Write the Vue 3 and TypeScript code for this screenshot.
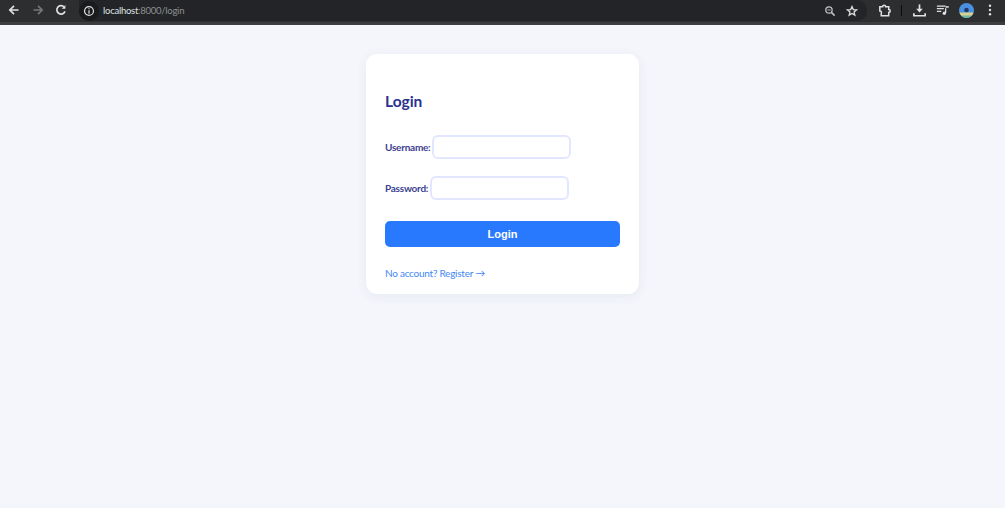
<script setup lang="ts">
import { ref } from "vue";

const username = ref("");
const password = ref("");
</script>

<template>
  <div class="page">
    <header class="toolbar">
      <div class="nav">
        <svg viewBox="0 0 16 16" width="16" height="16">
          <path d="M12.500 8H4M8 3.800 3.800 8 8 12.200" fill="none" stroke="#dfe1e4" stroke-width="1.700" />
        </svg>
        <svg viewBox="0 0 16 16" width="16" height="16">
          <path d="M3.500 8H12M8 3.800 12.200 8 8 12.200" fill="none" stroke="#74777a" stroke-width="1.700" />
        </svg>
        <svg viewBox="0 0 16 16" width="16" height="16">
          <path d="M12 9.400A4.200 4.200 0 1 1 11.100 5" fill="none" stroke="#dfe1e4" stroke-width="1.700" />
          <path d="M12.400 3v3.700H8.700z" fill="#dfe1e4" />
        </svg>
      </div>
      <div class="omnibox">
        <span class="site-chip">
          <svg viewBox="0 0 14 14" width="12" height="12">
            <circle cx="7" cy="7" r="5.200" fill="none" stroke="#dfe1e4" stroke-width="1.400" />
            <path d="M7 6.200v4M7 3.800v1.300" stroke="#dfe1e4" stroke-width="1.400" />
          </svg>
        </span>
        <span class="url"><span class="host">localhost</span>:8000/login</span>
        <div class="omni-actions">
          <svg viewBox="0 0 14 14" width="12" height="12">
            <circle cx="5.800" cy="5.800" r="3.700" fill="none" stroke="#c4c7c5" stroke-width="1.400" />
            <path d="M8.600 8.600 12.400 12.400" stroke="#c4c7c5" stroke-width="1.700" />
            <path d="M3.900 5.800h3.800" stroke="#c4c7c5" stroke-width="1" />
          </svg>
          <svg viewBox="0 0 14 14" width="12" height="12">
            <path d="M7 1.800 8.500 5.300l3.800.3-2.900 2.500.9 3.700L7 9.800l-3.300 2 .9-3.700L1.700 5.600l3.800-.3z" fill="none" stroke="#dcdcdc" stroke-width="1.500" />
          </svg>
        </div>
      </div>
      <div class="tools">
        <svg class="ext" viewBox="0 0 16 16" width="15" height="15">
          <path d="M3 4h3a1.600 1.600 0 0 1 3.200 0h3.300v3a1.600 1.600 0 0 1 0 3.200v3.300H4.500V11a1.600 1.600 0 0 0-1.500-2.500z" fill="none" stroke="#dfe1e4" stroke-width="1.600" />
        </svg>
        <span class="divider"></span>
        <svg class="dl" viewBox="0 0 16 16" width="15" height="15">
          <path d="M8 1.500v7" stroke="#dfe1e4" stroke-width="1.800" />
          <path d="M4.500 6 8 10.200 11.500 6z" fill="#dfe1e4" />
          <path d="M2 11v2.600h12V11" fill="none" stroke="#dfe1e4" stroke-width="1.800" />
        </svg>
        <svg class="media" viewBox="0 0 16 16" width="14" height="14">
          <path d="M1 3.500h10M1 6.500h8M1 9.500h5" stroke="#dfe1e4" stroke-width="1.500" />
          <path d="M11 6v5.500" stroke="#dfe1e4" stroke-width="1.500" />
          <circle cx="9.500" cy="11.700" r="1.900" fill="#dfe1e4" />
          <path d="M11 4.500h3.500" stroke="#dfe1e4" stroke-width="1.800" />
        </svg>
        <svg class="avatar" viewBox="0 0 15 15" width="15" height="15">
          <circle cx="7.500" cy="7.500" r="7.500" fill="#4a90e2" />
          <path d="M.4 9.500h14.200a7.500 7.500 0 0 1-14.200 0z" fill="#d9cf8f" />
          <path d="M2 12.500h11a7.500 7.500 0 0 1-11 0z" fill="#6fb8a6" />
          <circle cx="7.500" cy="7" r="2.300" fill="#1f3a68" />
        </svg>
        <svg class="more" viewBox="0 0 4 14" width="4" height="12">
          <circle cx="2" cy="2" r="1.400" fill="#dfe1e4" />
          <circle cx="2" cy="7" r="1.400" fill="#dfe1e4" />
          <circle cx="2" cy="12" r="1.400" fill="#dfe1e4" />
        </svg>
      </div>
    </header>

    <main class="content">
      <form class="card" @submit.prevent>
        <h2>Login</h2>
        <div class="field">
          <label for="username">Username:</label>
          <input id="username" v-model="username" type="text" />
        </div>
        <div class="field">
          <label for="password">Password:</label>
          <input id="password" v-model="password" type="password" />
        </div>
        <button type="submit">Login</button>
        <a class="register" href="#">No account? Register →</a>
      </form>
    </main>
  </div>
</template>

<style>
html,
body {
  margin: 0;
  background: #f4f6fb;
}
</style>

<style scoped>
.page {
  display: flex;
  flex-direction: column;
  height: 508px;
  overflow: hidden;
  font-family: Lato, "Open Sans", sans-serif;
}
.toolbar {
  display: flex;
  align-items: center;
  height: 20px;
  flex: none;
  padding-bottom: 2px;
  background: #2d2e30;
  border-bottom: 3px solid #3c3d3f;
}
.nav {
  display: flex;
  align-items: center;
  gap: 7.500px;
  padding-left: 6px;
}
.omnibox {
  display: flex;
  align-items: center;
  align-self: flex-start;
  width: 788px;
  height: 21px;
  margin-left: 10px;
  background: #232427;
  border-radius: 0 11px 11px 11px;
}
.site-chip {
  display: flex;
  align-items: center;
  justify-content: center;
  width: 20px;
  height: 20px;
  background: #1a1b1d;
  border-radius: 50%;
}
.url {
  margin-left: 4px;
  font-size: 9.500px;
  letter-spacing: -0.25px;
  color: #8e9093;
}
.host {
  color: #dfe1e4;
}
.omni-actions {
  display: flex;
  align-items: center;
  gap: 10px;
  margin-left: auto;
  padding-right: 9px;
}
.tools {
  display: flex;
  align-items: center;
  flex: 1;
}
.ext {
  margin-left: 10px;
}
.divider {
  width: 1px;
  height: 11px;
  margin-left: 9px;
  background: #0c0c0d;
}
.dl {
  margin-left: 10px;
}
.media {
  margin-left: 9px;
}
.avatar {
  margin-left: 9px;
}
.more {
  margin-left: 14px;
}
.content {
  display: flex;
  justify-content: center;
  flex: 1;
  padding-top: 29px;
  background: #f4f6fb;
}
.card {
  display: flex;
  flex-direction: column;
  align-items: flex-start;
  box-sizing: border-box;
  width: 273px;
  height: 240px;
  padding: 37px 19px 0;
  background: #fff;
  border-radius: 11px;
  box-shadow: 0 2px 12px rgba(40, 50, 120, 0.07);
}
h2 {
  margin: 0 0 24px;
  font-size: 15.500px;
  line-height: 20px;
  font-weight: 700;
  color: #2b3191;
}
.field {
  display: flex;
  align-items: center;
  gap: 2px;
  margin-bottom: 17px;
}
label {
  font-size: 10px;
  font-weight: 700;
  letter-spacing: -0.25px;
  color: #3c4290;
}
input {
  box-sizing: border-box;
  width: 139px;
  height: 24px;
  padding: 0 8px;
  background: #fff;
  border: 2px solid #e2e6ff;
  border-radius: 6px;
  outline: none;
}
button {
  align-self: stretch;
  height: 26px;
  margin-top: 4px;
  padding: 0;
  font-family: "Liberation Sans", Arial, sans-serif;
  font-size: 11px;
  font-weight: 700;
  color: #fff;
  background: #2979ff;
  border: none;
  border-radius: 5px;
}
.register {
  margin-top: 20px;
  font-size: 10px;
  letter-spacing: -0.25px;
  color: #3f87f5;
  text-decoration: none;
}
</style>
